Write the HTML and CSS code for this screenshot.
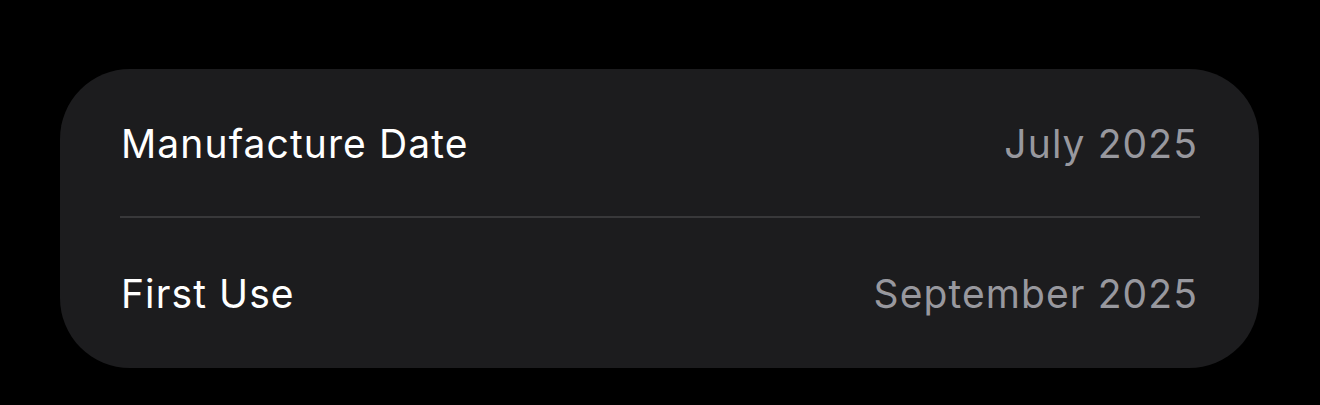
FILE: index.html
```html
<!DOCTYPE html>
<html lang="en">
<head>
    <meta charset="UTF-8">
    <meta name="viewport" content="width=device-width, initial-scale=1.0">
    <title>Device Info</title>
    <link rel="stylesheet" href="styles.css">
</head>
<body>
    <div class="card">
        <div class="row row-top">
            <span class="label">Manufacture Date</span>
            <span class="value">July 2025</span>
        </div>
        <div class="divider"></div>
        <div class="row">
            <span class="label">First Use</span>
            <span class="value">September 2025</span>
        </div>
    </div>
</body>
</html>
```

FILE: styles.css
```css
body {
    margin: 0;
    padding: 69px 61px 0 60px;
    background-color: #000;
    font-family: Inter, "Noto Sans", sans-serif;
}
.card {
    background-color: #1c1c1e;
    border-radius: 70px;
    height: 299px;
    display: flex;
    flex-direction: column;
}
.row {
    flex: 1;
    display: flex;
    align-items: center;
    justify-content: space-between;
    box-sizing: border-box;
    padding: 1px 62px 0 61px;
    font-size: 39px;
    letter-spacing: 1.1px;
}
.row-top {
    flex: 0 0 147px;
}
.label {
    color: #fff;
}
.value {
    color: #98989e;
    margin-right: -1px;
}
.divider {
    height: 2px;
    background-color: #38383a;
    margin: 0 59px 0 60px;
}
```
